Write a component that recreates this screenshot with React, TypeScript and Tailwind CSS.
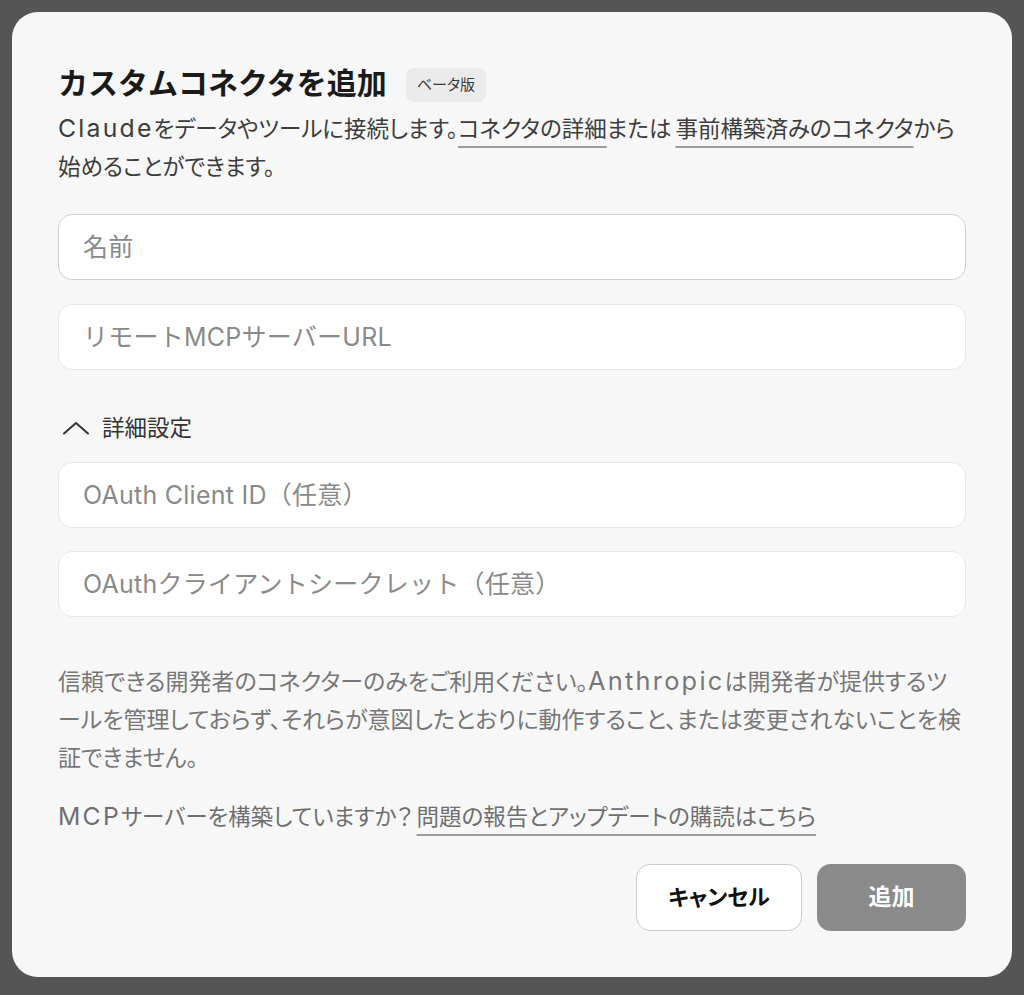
import React from "react";

const font = "font-['Inter','Noto_Sans_CJK_JP',sans-serif]";
const link = "underline decoration-[#9c9c9c] decoration-[1.5px] underline-offset-[9px]";

// Latin runs sit wider than the Japanese around them
function Latin({ children }: { children: React.ReactNode }) {
  return <span className="text-[1.1em] leading-none tracking-[0.09em]">{children}</span>;
}

function Field({ placeholder, strong }: { placeholder: string; strong?: boolean }) {
  return (
    <input
      type="text"
      placeholder={placeholder}
      className={`h-[66px] w-full rounded-[14px] border bg-white px-6 text-[25px] tracking-[0.01em] text-[#222] [font-feature-settings:normal] placeholder:text-[#8a8a8a] focus:outline-none ${
        strong ? "border-[#cfcfcf]" : "border-[#e7e7e7]"
      }`}
    />
  );
}

export default function App() {
  return (
    <div className={`min-h-screen bg-[#555555] p-3 ${font} [font-feature-settings:'palt']`}>
      <div className="flex h-[965px] w-[1000px] flex-col rounded-[26px] bg-[#f7f7f7] px-[46px] pt-[51px]">
        {/* Header */}
        <div className="flex h-10 items-center">
          <h1 className="text-[30px] font-bold leading-10 text-[#1a1a1a] [font-feature-settings:normal]">
            カスタムコネクタを追加
          </h1>
          <span className="ml-[19px] mt-1 flex h-[34px] items-center rounded-lg bg-[#ebebeb] px-[11px] text-[15px] text-[#3a3a3a]">
            ベータ版
          </span>
        </div>

        <p className="mt-[7px] whitespace-nowrap text-[22.5px] leading-[38px] text-[#3d3d3d]">
          <Latin>Claude</Latin>をデータやツールに接続します。
          <a className={link}>コネクタの詳細</a>
          または
          <a className={`ml-1 ${link}`}>事前構築済みのコネクタ</a>
          から
          <br />
          始めることができます。
        </p>

        {/* Fields */}
        <div className="mt-[28px]">
          <Field placeholder="名前" strong />
        </div>
        <div className="mt-6">
          <Field placeholder="リモートMCPサーバーURL" />
        </div>

        <button className="mt-[43px] flex h-[30px] items-center gap-3 self-start pl-1 text-[22.5px] text-[#333]">
          <svg width="28" height="14" viewBox="0 0 28 14" fill="none" stroke="#333" strokeWidth="2" strokeLinecap="round" strokeLinejoin="round">
            <path d="M2 12.5 14 2l12 10.5" />
          </svg>
          詳細設定
        </button>

        <div className="mt-[19px]">
          <Field placeholder="OAuth Client ID（任意）" />
        </div>
        <div className="mt-[23px]">
          <Field placeholder="OAuthクライアントシークレット（任意）" />
        </div>

        {/* Notes */}
        <p className="mt-[46px] whitespace-nowrap text-[23px] leading-[38px] text-[#777]">
          信頼できる開発者のコネクターのみをご利用ください。<Latin>Anthropic</Latin>は開発者が提供するツ
          <br />
          ールを管理しておらず、それらが意図したとおりに動作すること、または変更されないことを検
          <br />
          証できません。
        </p>

        <p className="mt-[21px] whitespace-nowrap text-[22.5px] leading-[38px] text-[#6f6f6f]">
          <Latin>MCP</Latin>サーバーを構築していますか？
          <a className={`ml-1 ${link}`}>問題の報告とアップデートの購読はこちら</a>
        </p>

        {/* Actions */}
        <div className="mt-[28px] flex justify-end gap-[15px]">
          <button className="h-[67px] w-[166px] rounded-[14px] border border-[#cccccc] bg-white text-[22px] font-bold text-[#111]">
            キャンセル
          </button>
          <button className="h-[67px] w-[149px] rounded-[14px] bg-[#8a8a8a] text-[23px] font-bold text-white">
            追加
          </button>
        </div>
      </div>
    </div>
  );
}
